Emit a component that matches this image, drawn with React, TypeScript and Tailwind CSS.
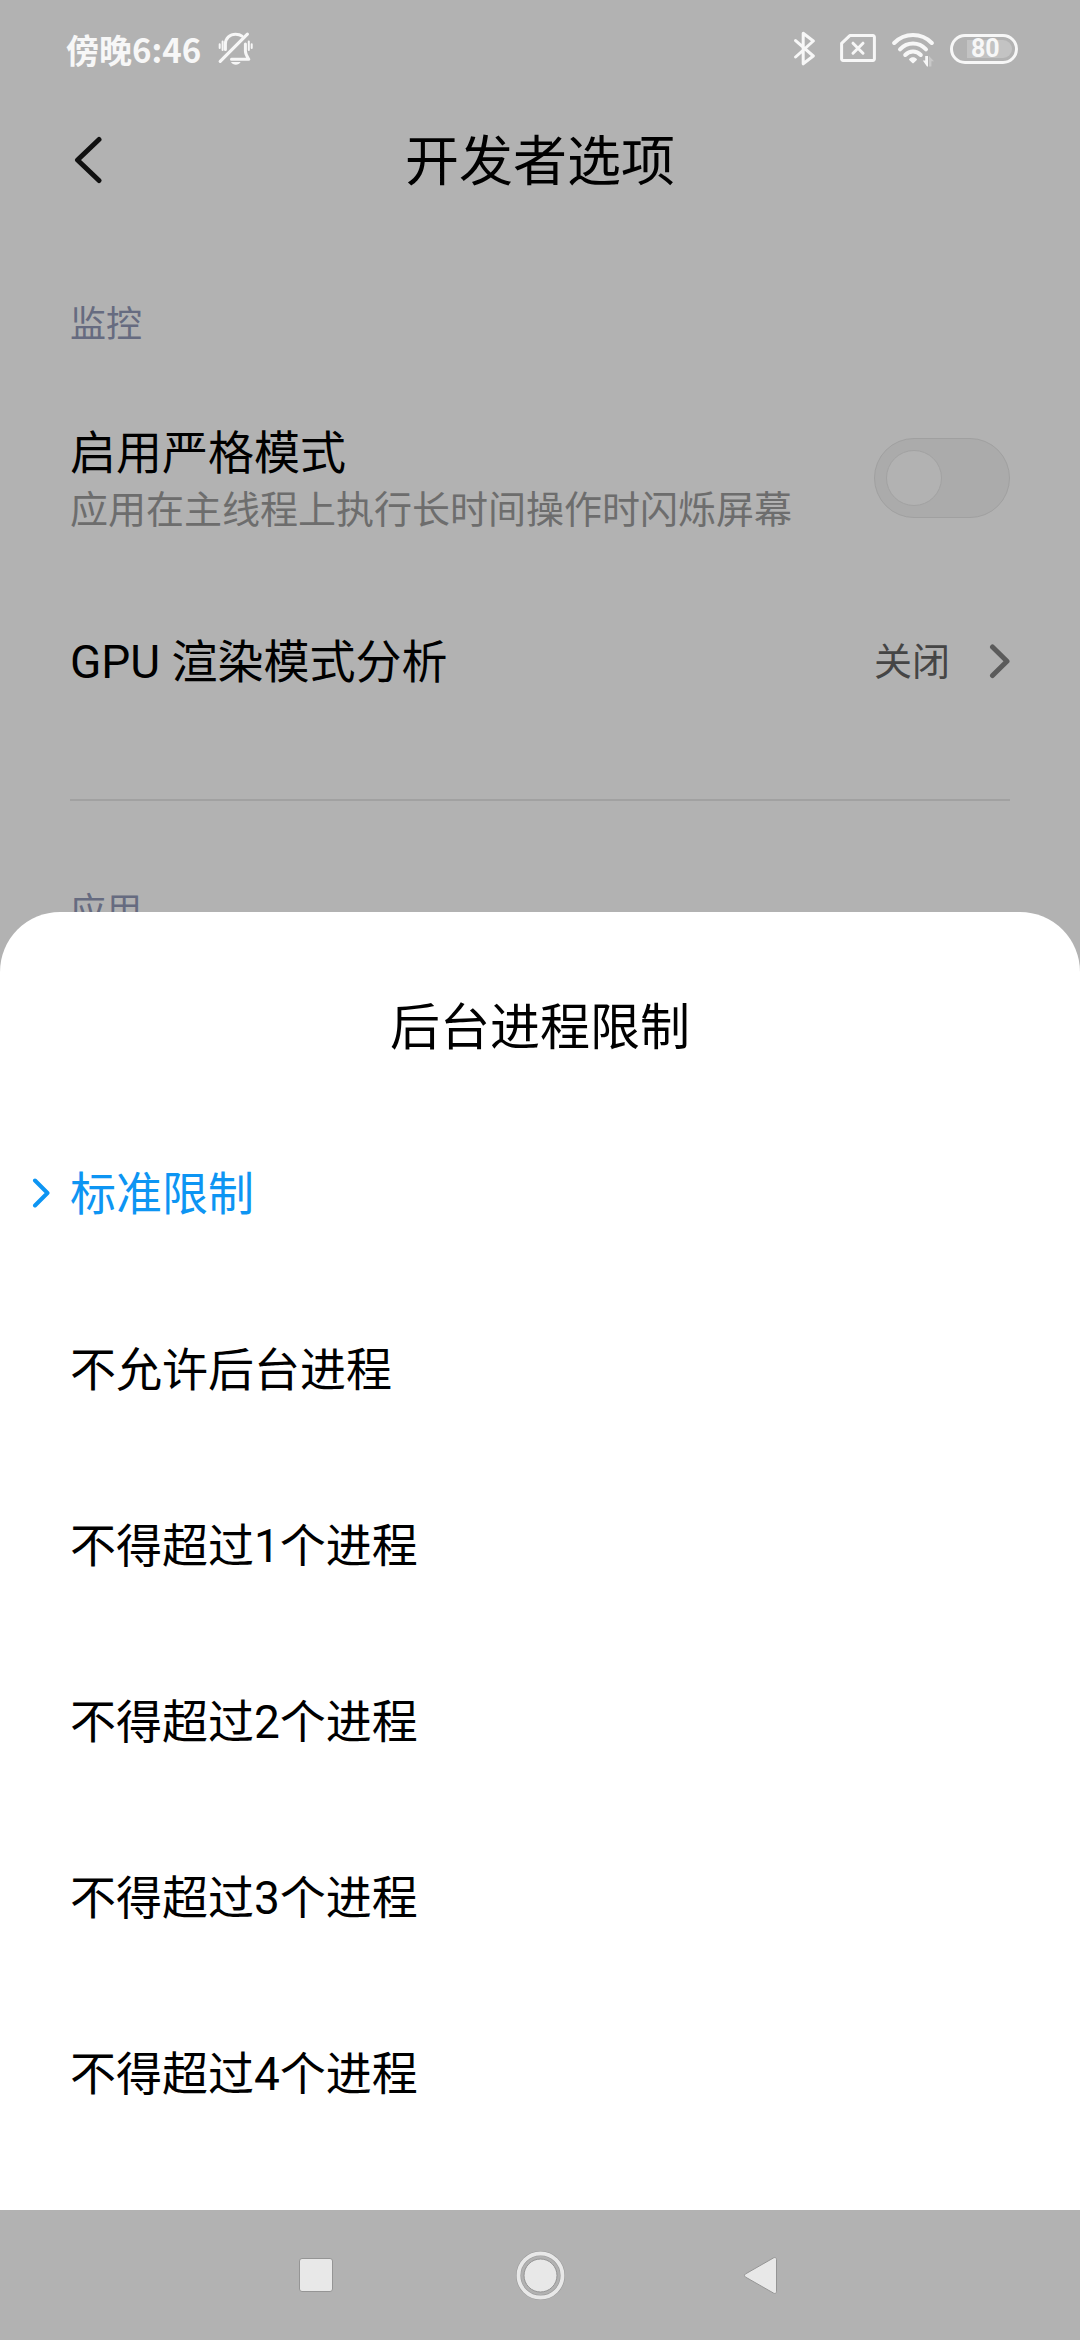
import { useState } from 'react';

const options = [
  '标准限制',
  '不允许后台进程',
  '不得超过1个进程',
  '不得超过2个进程',
  '不得超过3个进程',
  '不得超过4个进程',
];

function MutedBellIcon() {
  return (
    <svg width="36" height="36" viewBox="0 0 36 36" fill="none" stroke="currentColor" strokeLinecap="round">
      <path d="M8.4 18.5V13C8.4 6.8 13 3.2 18.6 3.2c2.7 0 4.800.7 6.400 2" strokeWidth="3" />
      <path d="M28.4 13v7c0 3 1.400 5 3.400 8.300H14.500" strokeWidth="3" strokeLinejoin="round" />
      <path d="M3.2 30.3 30.4 3.2" strokeWidth="3.200" />
      <path d="M14 31h9.6c-1 1.8-2.8 2.8-4.8 2.8S15 32.8 14 31z" fill="currentColor" stroke="none" />
      <path d="M2.7 13.3v3.6M5.6 10.6v8.4M31.8 10.6v8.4M34.7 13.3v3.6" strokeWidth="2" />
    </svg>
  );
}

function BluetoothIcon() {
  return (
    <svg width="22" height="36" viewBox="0 0 22 36" fill="none" stroke="currentColor" strokeWidth="3" strokeLinecap="round" strokeLinejoin="round">
      <path d="M1.6 9.6 19.3 25 9.2 32.8V2.2L19.3 10 1.6 26" />
    </svg>
  );
}

function NoSimIcon() {
  return (
    <svg width="36" height="36" viewBox="0 0 36 36" fill="none" stroke="currentColor" strokeWidth="3" strokeLinejoin="round" strokeLinecap="round">
      <path d="M9.8 4.6H33a1.4 1.4 0 0 1 1.4 1.4v22a1.4 1.4 0 0 1-1.4 1.4H3a1.4 1.4 0 0 1-1.4-1.4V12.4z" />
      <path d="m13 12.2 10 10M23 12.2l-10 10" />
    </svg>
  );
}

function WifiIcon() {
  return (
    <svg width="42" height="36" viewBox="0 0 42 36" fill="none" stroke="currentColor" strokeWidth="4" strokeLinecap="round">
      <path d="M2.2 12C7.2 6.800 13.600 4 21 4s13.800 2.800 18.800 8" />
      <path d="M8 18.4c3.600-3.800 8-5.800 13-5.800s9.400 2 13 5.800" />
      <path d="M13.2 24c2.200-2.200 4.800-3.400 7.800-3.400s5.600 1.200 7.800 3.400" />
      <path d="M17.2 28c1-1.200 2.300-1.800 3.800-1.800s2.800.6 3.800 1.800c.2.3.2.6 0 .9L21.700 32c-.4.4-1 .4-1.4 0l-3.100-3.100c-.2-.3-.2-.6 0-.9z" fill="currentColor" stroke="none" />
      <path d="M30.8 29.6h2.400V25H36v10.500h-1z" fill="currentColor" stroke="none" />
      <path d="M37 25l5 5.200h-2.600v5.300H37z" fill="#c8c8c8" stroke="none" />
    </svg>
  );
}

function StatusBar() {
  return (
    <div className="flex h-[98px] shrink-0 items-center justify-between pr-[62px] pl-[66px] text-[#f7f7f7]">
      <div className="flex items-center gap-4">
        <span className="font-['Noto_Sans_CJK_SC',sans-serif] text-[33px] leading-10 font-bold">傍晚6:46</span>
        <MutedBellIcon />
      </div>
      <div className="flex items-center">
        <BluetoothIcon />
        <span className="ml-6">
          <NoSimIcon />
        </span>
        <span className="ml-4">
          <WifiIcon />
        </span>
        <div className="ml-4 flex h-[30px] w-[68px] items-center rounded-full border-3 border-[#f7f7f7] pr-[3px] pl-[14px]">
          <span className="flex h-[18px] flex-1 items-center rounded-r-full bg-[#c3c3c3] pl-1 text-[25px] leading-6 font-bold">
            80
          </span>
        </div>
      </div>
    </div>
  );
}

function Header() {
  return (
    <header className="grid h-[124px] shrink-0 grid-cols-[1fr_auto_1fr] items-center px-[70px]">
      <button type="button" aria-label="返回" className="justify-self-start">
        <svg width="32" height="48" viewBox="0 0 32 48" fill="none" stroke="#111" strokeWidth="5" strokeLinecap="round" strokeLinejoin="round">
          <path d="M29 3.5 7.5 24 29 44.5" />
        </svg>
      </button>
      <h1 className="pt-1.5 text-[54px] leading-[72px]">开发者选项</h1>
    </header>
  );
}

function SettingsList() {
  const [strict, setStrict] = useState(false);

  return (
    <main className="min-h-0 flex-1 basis-0 overflow-hidden px-[70px] pt-[78px]">
      <h2 className="mb-9 text-[36px] leading-[50px] text-[#666b80]">监控</h2>
      <div className="flex h-[184px] items-center justify-between">
        <label htmlFor="strict">
          <span className="block text-[46px] leading-[64px]">启用严格模式</span>
          <span className="block text-[38px] leading-[50px] text-[#6d6d6d]">应用在主线程上执行长时间操作时闪烁屏幕</span>
        </label>
        <input
          id="strict"
          type="checkbox"
          role="switch"
          checked={strict}
          onChange={(e) => setStrict(e.target.checked)}
          className="h-20 w-[136px] shrink-0 appearance-none rounded-full border border-[#a0a0a0] bg-[#ababab] p-[11px] before:block before:size-14 before:rounded-full before:border before:border-[#a2a2a2] before:bg-[#b2b2b2] checked:before:ml-auto"
        />
      </div>
      <button type="button" className="flex h-[184px] w-full items-center text-left">
        <span className="flex-1 text-[46px] leading-[64px]">GPU 渲染模式分析</span>
        <span className="text-[38px] leading-[50px] text-[#454545]">关闭</span>
        <svg className="ml-9" width="24" height="36" viewBox="0 0 24 36" fill="none" stroke="#5b5b5b" strokeWidth="5" strokeLinecap="round" strokeLinejoin="round">
          <path d="M6.5 3 21 17.2 6.5 31.5" />
        </svg>
      </button>
      <hr className="mt-[45px] mb-[86px] border-t-2 border-[#a1a1a1]" />
      <h2 className="text-[36px] leading-[50px] text-[#666b80]">应用</h2>
    </main>
  );
}

function LimitSheet() {
  const [selected, setSelected] = useState(options[0]);

  return (
    <section role="dialog" aria-labelledby="sheet-title" className="shrink-0 rounded-t-[60px] bg-white pt-[82px] pb-12">
      <h2 id="sheet-title" className="mb-11 text-center text-[50px] leading-[68px]">
        后台进程限制
      </h2>
      <ul>
        {options.map((option) => (
          <li key={option}>
            <button
              type="button"
              onClick={() => setSelected(option)}
              className={`flex h-[176px] w-full items-center pl-[30px] text-left text-[46px] leading-[64px] ${
                option === selected ? 'text-[#0d95f3]' : 'text-black'
              }`}
            >
              <span className="w-10 shrink-0">
                {option === selected && (
                  <svg width="20" height="32" viewBox="0 0 20 32" fill="none" stroke="currentColor" strokeWidth="4" strokeLinecap="round" strokeLinejoin="round">
                    <path d="M5 2.5 17.5 15 5 27.5" />
                  </svg>
                )}
              </span>
              {option}
            </button>
          </li>
        ))}
      </ul>
    </section>
  );
}

function NavBar() {
  return (
    <nav className="flex h-[130px] shrink-0 items-center justify-center">
      <button type="button" aria-label="最近任务" className="flex w-56 justify-center">
        <svg width="50" height="50" viewBox="0 0 50 50" fill="#e8e8e8" stroke="#959595">
          <rect x="8.5" y="8.5" width="33" height="33" rx="2.5" />
        </svg>
      </button>
      <button type="button" aria-label="主屏幕" className="flex w-56 justify-center">
        <svg width="50" height="50" viewBox="0 0 50 50" fill="none">
          <circle cx="25.5" cy="25.5" r="22" stroke="#9a9a9a" strokeWidth="5" />
          <circle cx="25.5" cy="25.5" r="22" stroke="#e8e8e8" strokeWidth="3.8" />
          <circle cx="25.5" cy="25.5" r="16.5" fill="#e8e8e8" stroke="#959595" />
        </svg>
      </button>
      <button type="button" aria-label="返回上一级" className="flex w-56 justify-center">
        <svg width="50" height="50" viewBox="0 0 50 50" fill="#e8e8e8" stroke="#959595">
          <path d="M37.5 9.3v32.4c0 1.5-1.5 2.2-2.8 1.5L6.4 27c-1.2-.8-1.2-2.2 0-3L34.7 7.8c1.3-.7 2.8 0 2.8 1.5z" />
        </svg>
      </button>
    </nav>
  );
}

export default function App() {
  return (
    <div
      lang="zh-CN"
      className="flex h-screen flex-col overflow-hidden bg-[#b2b2b2] font-[Roboto,'Noto_Sans_CJK_SC',sans-serif] text-black"
    >
      <StatusBar />
      <Header />
      <SettingsList />
      <LimitSheet />
      <NavBar />
    </div>
  );
}
